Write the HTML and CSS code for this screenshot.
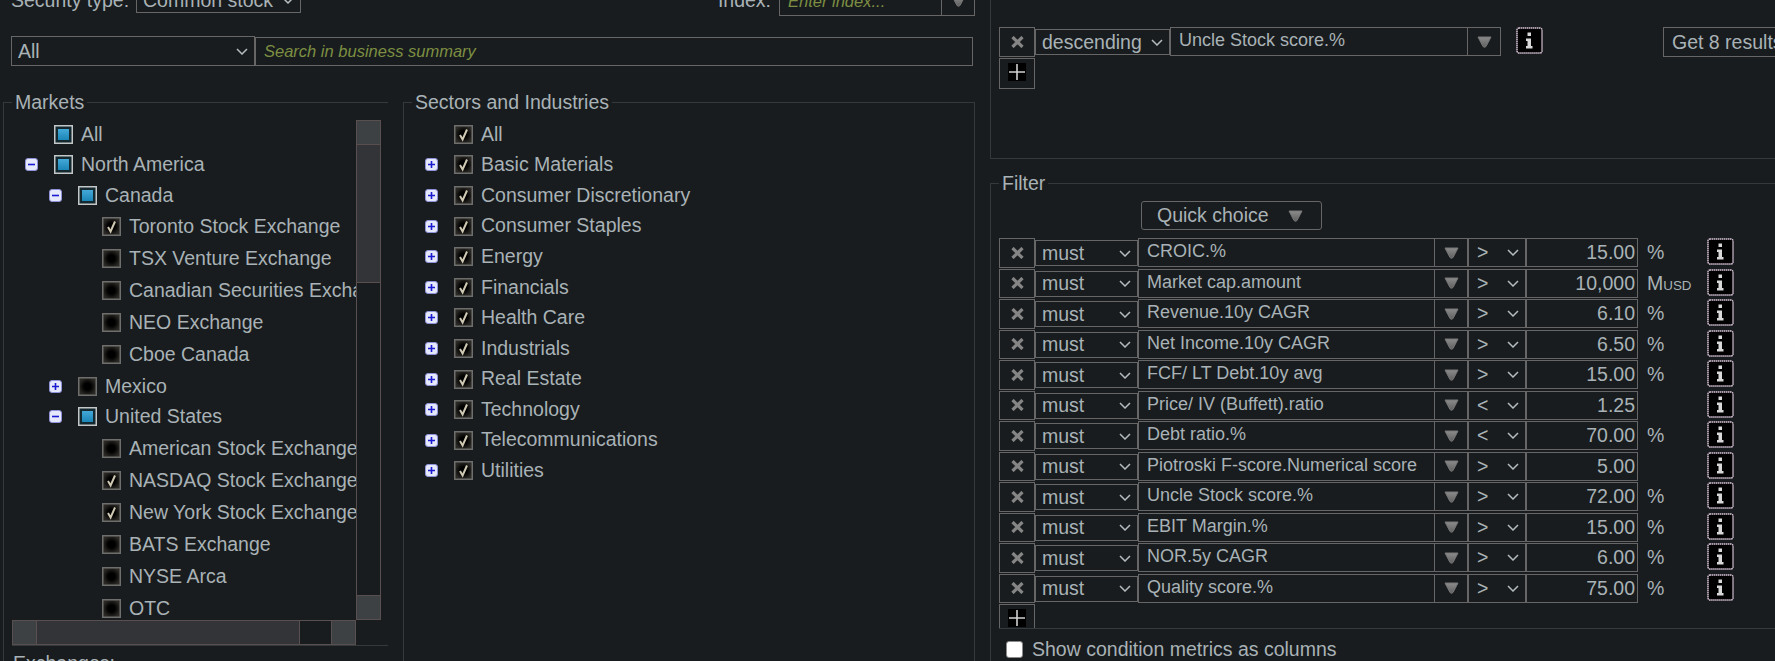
FILE: index.html
```html
<!DOCTYPE html>
<html lang="en">

<head>
    <meta charset="UTF-8">
    <meta name="viewport" content="width=device-width, initial-scale=1.0">
    <title>Stock screener</title>
    <link rel="stylesheet" href="styles.css">
</head>

<body>
<!-- shared icons -->
<svg class="defs" width="0" height="0">
    <defs>
        <radialGradient id="boxDark">
            <stop offset="40%" stop-color="#000"/>
            <stop offset="100%" stop-color="#2b2925"/>
        </radialGradient>
        <linearGradient id="boxBlue" x1="0" y1="0" x2="0" y2="1">
            <stop offset="0%" stop-color="#44a9d8"/>
            <stop offset="100%" stop-color="#1b86b8"/>
        </linearGradient>
        <linearGradient id="arrowGrey" x1="0" y1="0" x2="0" y2="1">
            <stop offset="0%" stop-color="#8c8c8c"/>
            <stop offset="100%" stop-color="#5f5f5f"/>
        </linearGradient>
    </defs>
    <symbol id="cb-off" viewBox="0 0 19 19">
        <rect x="0.75" y="0.75" width="17.5" height="17.5" fill="url(#boxDark)" stroke="#6e6e6c" stroke-width="1.5"/>
    </symbol>
    <symbol id="cb-on" viewBox="0 0 19 19">
        <rect x="0.75" y="0.75" width="17.5" height="17.5" fill="url(#boxDark)" stroke="#6e6e6c" stroke-width="1.5"/>
        <path d="M6 10 L8.6 14.5 L13 4.5" fill="none" stroke="#cfc8b2" stroke-width="2"/>
    </symbol>
    <symbol id="cb-part" viewBox="0 0 19 19">
        <rect x="0.75" y="0.75" width="17.5" height="17.5" fill="#14282f" stroke="#c4c7c8" stroke-width="1.5"/>
        <rect x="4" y="4" width="11" height="11" fill="url(#boxBlue)"/>
    </symbol>
    <symbol id="exp-plus" viewBox="0 0 13 13">
        <rect x="0.5" y="0.5" width="12" height="12" rx="2.5" fill="#e6e8fb" stroke="#8f93dc"/>
        <path d="M3 6.5 H10 M6.5 3 V10" stroke="#1a1ad0" stroke-width="1.6"/>
    </symbol>
    <symbol id="exp-minus" viewBox="0 0 13 13">
        <rect x="0.5" y="0.5" width="12" height="12" rx="2.5" fill="#e6e8fb" stroke="#8f93dc"/>
        <path d="M3 6.5 H10" stroke="#1a1ad0" stroke-width="1.6"/>
    </symbol>
    <symbol id="chev" viewBox="0 0 12 7">
        <path d="M1 1 L6 6 L11 1" fill="none" stroke="#b4bcc0" stroke-width="1.5"/>
    </symbol>
    <symbol id="arrow" viewBox="0 0 15 12">
        <path d="M1 1 H14 L9 10.5 Q7.5 12 6 10.5 Z" fill="url(#arrowGrey)" stroke="#777" stroke-linejoin="round"/>
    </symbol>
    <symbol id="cross" viewBox="0 0 13 12">
        <path d="M1.5 1 L11.5 11 M11.5 1 L1.5 11" stroke="#858585" stroke-width="3.2"/>
    </symbol>
    <symbol id="plus" viewBox="0 0 18 18">
        <rect width="18" height="18" fill="#000"/>
        <path d="M1 9 H17 M9 1 V17" stroke="#d0d0d0" stroke-width="1.6"/>
    </symbol>
    <symbol id="info" viewBox="0 0 27 27">
        <rect x="1" y="1" width="25" height="25" rx="2" fill="#000" stroke="#d8c4d8" stroke-width="1.5" stroke-dasharray="1.5 .5"/>
        <path d="M11.5 5.5 H15 V9 H11.5 Z M10 11.5 H15 V19 H16.5 V21.5 H10 V19 H11.5 V14 H10 Z" fill="#d8d8d8"/>
    </symbol>
</svg>

<div class="page">

    <div class="left">
        <div class="type-row">
            <span class="type-label">Security type:</span>
            <div class="sel type-sel"><span>Common stock</span><svg class="chev"><use href="#chev"/></svg></div>
            <span class="index-label">Index:</span>
            <div class="field index-field">
                <span class="field-text hint">Enter index...</span>
                <span class="field-arrow"><svg class="arrow"><use href="#arrow"/></svg></span>
            </div>
        </div>

        <div class="search-row">
            <div class="sel search-sel"><span>All</span><svg class="chev"><use href="#chev"/></svg></div>
            <div class="search-box hint">Search in business summary</div>
        </div>

        <div class="panels">
            <fieldset class="markets">
                <legend>Markets</legend>
                <div class="tree-wrap">
                    <div class="tree">
                        <div class="node"><span class="exp"></span><svg class="cb"><use href="#cb-part"/></svg>All</div>
                        <div class="node"><svg class="exp"><use href="#exp-minus"/></svg><svg class="cb"><use href="#cb-part"/></svg>North America</div>
                        <div class="node lvl1"><svg class="exp"><use href="#exp-minus"/></svg><svg class="cb"><use href="#cb-part"/></svg>Canada</div>
                        <div class="node leaf"><svg class="cb"><use href="#cb-on"/></svg>Toronto Stock Exchange</div>
                        <div class="node leaf"><svg class="cb"><use href="#cb-off"/></svg>TSX Venture Exchange</div>
                        <div class="node leaf"><svg class="cb"><use href="#cb-off"/></svg>Canadian Securities Exchange</div>
                        <div class="node leaf"><svg class="cb"><use href="#cb-off"/></svg>NEO Exchange</div>
                        <div class="node leaf"><svg class="cb"><use href="#cb-off"/></svg>Cboe Canada</div>
                        <div class="node lvl1"><svg class="exp"><use href="#exp-plus"/></svg><svg class="cb"><use href="#cb-off"/></svg>Mexico</div>
                        <div class="node lvl1"><svg class="exp"><use href="#exp-minus"/></svg><svg class="cb"><use href="#cb-part"/></svg>United States</div>
                        <div class="node leaf"><svg class="cb"><use href="#cb-off"/></svg>American Stock Exchange</div>
                        <div class="node leaf"><svg class="cb"><use href="#cb-on"/></svg>NASDAQ Stock Exchange</div>
                        <div class="node leaf"><svg class="cb"><use href="#cb-on"/></svg>New York Stock Exchange</div>
                        <div class="node leaf"><svg class="cb"><use href="#cb-off"/></svg>BATS Exchange</div>
                        <div class="node leaf"><svg class="cb"><use href="#cb-off"/></svg>NYSE Arca</div>
                        <div class="node leaf"><svg class="cb"><use href="#cb-off"/></svg>OTC</div>
                    </div>
                    <div class="vbar">
                        <span class="bar-btn"></span>
                        <span class="vthumb"></span>
                        <span class="bar-track"></span>
                        <span class="bar-btn"></span>
                    </div>
                    <div class="hbar">
                        <span class="bar-btn"></span>
                        <span class="hthumb"></span>
                        <span class="bar-track"></span>
                        <span class="bar-btn"></span>
                    </div>
                </div>
                <div class="exchanges">Exchanges:</div>
            </fieldset>

            <fieldset class="sectors">
                <legend>Sectors and Industries</legend>
                <div class="sector-list">
                    <div class="node"><span class="exp"></span><svg class="cb"><use href="#cb-on"/></svg>All</div>
                    <div class="node"><svg class="exp"><use href="#exp-plus"/></svg><svg class="cb"><use href="#cb-on"/></svg>Basic Materials</div>
                    <div class="node"><svg class="exp"><use href="#exp-plus"/></svg><svg class="cb"><use href="#cb-on"/></svg>Consumer Discretionary</div>
                    <div class="node"><svg class="exp"><use href="#exp-plus"/></svg><svg class="cb"><use href="#cb-on"/></svg>Consumer Staples</div>
                    <div class="node"><svg class="exp"><use href="#exp-plus"/></svg><svg class="cb"><use href="#cb-on"/></svg>Energy</div>
                    <div class="node"><svg class="exp"><use href="#exp-plus"/></svg><svg class="cb"><use href="#cb-on"/></svg>Financials</div>
                    <div class="node"><svg class="exp"><use href="#exp-plus"/></svg><svg class="cb"><use href="#cb-on"/></svg>Health Care</div>
                    <div class="node"><svg class="exp"><use href="#exp-plus"/></svg><svg class="cb"><use href="#cb-on"/></svg>Industrials</div>
                    <div class="node"><svg class="exp"><use href="#exp-plus"/></svg><svg class="cb"><use href="#cb-on"/></svg>Real Estate</div>
                    <div class="node"><svg class="exp"><use href="#exp-plus"/></svg><svg class="cb"><use href="#cb-on"/></svg>Technology</div>
                    <div class="node"><svg class="exp"><use href="#exp-plus"/></svg><svg class="cb"><use href="#cb-on"/></svg>Telecommunications</div>
                    <div class="node"><svg class="exp"><use href="#exp-plus"/></svg><svg class="cb"><use href="#cb-on"/></svg>Utilities</div>
                </div>
            </fieldset>
        </div>
    </div>

    <div class="right">
        <div class="sort-box">
            <div class="sort-row">
                <div class="del"><svg class="cross"><use href="#cross"/></svg></div>
                <div class="sel sort-sel"><span>descending</span><svg class="chev"><use href="#chev"/></svg></div>
                <div class="field sort-field">
                    <span class="field-text">Uncle Stock score.%</span>
                    <span class="field-arrow"><svg class="arrow"><use href="#arrow"/></svg></span>
                </div>
                <svg class="info sort-info"><use href="#info"/></svg>
                <div class="results">Get 8 results</div>
            </div>
            <div class="add sort-add"><svg class="plus"><use href="#plus"/></svg></div>
        </div>

        <fieldset class="filter">
            <legend>Filter</legend>
            <div class="quick">Quick choice<svg class="arrow"><use href="#arrow"/></svg></div>

            <div class="f-row">
                <div class="del"><svg class="cross"><use href="#cross"/></svg></div>
                <div class="sel must"><span>must</span><svg class="chev"><use href="#chev"/></svg></div>
                <div class="field metric"><span class="field-text">CROIC.%</span><span class="field-arrow"><svg class="arrow"><use href="#arrow"/></svg></span></div>
                <div class="sel op"><span>&gt;</span><svg class="chev"><use href="#chev"/></svg></div>
                <div class="value">15.00</div>
                <div class="unit">%</div>
                <svg class="info"><use href="#info"/></svg>
            </div>
            <div class="f-row">
                <div class="del"><svg class="cross"><use href="#cross"/></svg></div>
                <div class="sel must"><span>must</span><svg class="chev"><use href="#chev"/></svg></div>
                <div class="field metric"><span class="field-text">Market cap.amount</span><span class="field-arrow"><svg class="arrow"><use href="#arrow"/></svg></span></div>
                <div class="sel op"><span>&gt;</span><svg class="chev"><use href="#chev"/></svg></div>
                <div class="value">10,000</div>
                <div class="unit">M<small>USD</small></div>
                <svg class="info"><use href="#info"/></svg>
            </div>
            <div class="f-row">
                <div class="del"><svg class="cross"><use href="#cross"/></svg></div>
                <div class="sel must"><span>must</span><svg class="chev"><use href="#chev"/></svg></div>
                <div class="field metric"><span class="field-text">Revenue.10y CAGR</span><span class="field-arrow"><svg class="arrow"><use href="#arrow"/></svg></span></div>
                <div class="sel op"><span>&gt;</span><svg class="chev"><use href="#chev"/></svg></div>
                <div class="value">6.10</div>
                <div class="unit">%</div>
                <svg class="info"><use href="#info"/></svg>
            </div>
            <div class="f-row">
                <div class="del"><svg class="cross"><use href="#cross"/></svg></div>
                <div class="sel must"><span>must</span><svg class="chev"><use href="#chev"/></svg></div>
                <div class="field metric"><span class="field-text">Net Income.10y CAGR</span><span class="field-arrow"><svg class="arrow"><use href="#arrow"/></svg></span></div>
                <div class="sel op"><span>&gt;</span><svg class="chev"><use href="#chev"/></svg></div>
                <div class="value">6.50</div>
                <div class="unit">%</div>
                <svg class="info"><use href="#info"/></svg>
            </div>
            <div class="f-row">
                <div class="del"><svg class="cross"><use href="#cross"/></svg></div>
                <div class="sel must"><span>must</span><svg class="chev"><use href="#chev"/></svg></div>
                <div class="field metric"><span class="field-text">FCF/ LT Debt.10y avg</span><span class="field-arrow"><svg class="arrow"><use href="#arrow"/></svg></span></div>
                <div class="sel op"><span>&gt;</span><svg class="chev"><use href="#chev"/></svg></div>
                <div class="value">15.00</div>
                <div class="unit">%</div>
                <svg class="info"><use href="#info"/></svg>
            </div>
            <div class="f-row">
                <div class="del"><svg class="cross"><use href="#cross"/></svg></div>
                <div class="sel must"><span>must</span><svg class="chev"><use href="#chev"/></svg></div>
                <div class="field metric"><span class="field-text">Price/ IV (Buffett).ratio</span><span class="field-arrow"><svg class="arrow"><use href="#arrow"/></svg></span></div>
                <div class="sel op"><span>&lt;</span><svg class="chev"><use href="#chev"/></svg></div>
                <div class="value">1.25</div>
                <div class="unit"></div>
                <svg class="info"><use href="#info"/></svg>
            </div>
            <div class="f-row">
                <div class="del"><svg class="cross"><use href="#cross"/></svg></div>
                <div class="sel must"><span>must</span><svg class="chev"><use href="#chev"/></svg></div>
                <div class="field metric"><span class="field-text">Debt ratio.%</span><span class="field-arrow"><svg class="arrow"><use href="#arrow"/></svg></span></div>
                <div class="sel op"><span>&lt;</span><svg class="chev"><use href="#chev"/></svg></div>
                <div class="value">70.00</div>
                <div class="unit">%</div>
                <svg class="info"><use href="#info"/></svg>
            </div>
            <div class="f-row">
                <div class="del"><svg class="cross"><use href="#cross"/></svg></div>
                <div class="sel must"><span>must</span><svg class="chev"><use href="#chev"/></svg></div>
                <div class="field metric"><span class="field-text">Piotroski F-score.Numerical score</span><span class="field-arrow"><svg class="arrow"><use href="#arrow"/></svg></span></div>
                <div class="sel op"><span>&gt;</span><svg class="chev"><use href="#chev"/></svg></div>
                <div class="value">5.00</div>
                <div class="unit"></div>
                <svg class="info"><use href="#info"/></svg>
            </div>
            <div class="f-row">
                <div class="del"><svg class="cross"><use href="#cross"/></svg></div>
                <div class="sel must"><span>must</span><svg class="chev"><use href="#chev"/></svg></div>
                <div class="field metric"><span class="field-text">Uncle Stock score.%</span><span class="field-arrow"><svg class="arrow"><use href="#arrow"/></svg></span></div>
                <div class="sel op"><span>&gt;</span><svg class="chev"><use href="#chev"/></svg></div>
                <div class="value">72.00</div>
                <div class="unit">%</div>
                <svg class="info"><use href="#info"/></svg>
            </div>
            <div class="f-row">
                <div class="del"><svg class="cross"><use href="#cross"/></svg></div>
                <div class="sel must"><span>must</span><svg class="chev"><use href="#chev"/></svg></div>
                <div class="field metric"><span class="field-text">EBIT Margin.%</span><span class="field-arrow"><svg class="arrow"><use href="#arrow"/></svg></span></div>
                <div class="sel op"><span>&gt;</span><svg class="chev"><use href="#chev"/></svg></div>
                <div class="value">15.00</div>
                <div class="unit">%</div>
                <svg class="info"><use href="#info"/></svg>
            </div>
            <div class="f-row">
                <div class="del"><svg class="cross"><use href="#cross"/></svg></div>
                <div class="sel must"><span>must</span><svg class="chev"><use href="#chev"/></svg></div>
                <div class="field metric"><span class="field-text">NOR.5y CAGR</span><span class="field-arrow"><svg class="arrow"><use href="#arrow"/></svg></span></div>
                <div class="sel op"><span>&gt;</span><svg class="chev"><use href="#chev"/></svg></div>
                <div class="value">6.00</div>
                <div class="unit">%</div>
                <svg class="info"><use href="#info"/></svg>
            </div>
            <div class="f-row">
                <div class="del"><svg class="cross"><use href="#cross"/></svg></div>
                <div class="sel must"><span>must</span><svg class="chev"><use href="#chev"/></svg></div>
                <div class="field metric"><span class="field-text">Quality score.%</span><span class="field-arrow"><svg class="arrow"><use href="#arrow"/></svg></span></div>
                <div class="sel op"><span>&gt;</span><svg class="chev"><use href="#chev"/></svg></div>
                <div class="value">75.00</div>
                <div class="unit">%</div>
                <svg class="info"><use href="#info"/></svg>
            </div>

            <div class="add-row">
                <div class="add filter-add"><svg class="plus"><use href="#plus"/></svg></div>
            </div>
            <div class="show-row"><span class="white-box"></span>Show condition metrics as columns</div>
        </fieldset>
    </div>

</div>
</body>

</html>
```

FILE: styles.css
```css
* {
    padding: 0;
    margin: 0;
    box-sizing: border-box;
}

body {
    background-color: #181c1e;
    color: #a9b2b6;
    font: 19.5px "Liberation Sans", Arial, sans-serif;
    overflow: hidden;
}

.defs {
    display: block;
}

.page {
    display: flex;
    height: 661px;
    overflow: hidden;
}

.left {
    width: 990px;
    flex-shrink: 0;
    padding-left: 3px;
}

.right {
    flex: 1;
    min-width: 0;
    overflow: hidden;
}

/* inputs */
.sel {
    display: flex;
    align-items: center;
    justify-content: space-between;
    border: 1px solid #666;
    padding: 0 6px 0 6px;
    flex-shrink: 0;
}

.chev {
    width: 12px;
    height: 7px;
    flex-shrink: 0;
}

.field {
    display: flex;
    border: 1px solid #666;
    flex-shrink: 0;
}

.field-text {
    flex: 1;
    padding: 0 8px;
    font-size: 18px;
    line-height: 25px;
    white-space: nowrap;
    overflow: hidden;
}

.field-arrow {
    width: 33px;
    display: flex;
    align-items: center;
    justify-content: center;
    border-left: 1px solid #666;
}

.arrow {
    width: 15px;
    height: 12px;
    flex-shrink: 0;
}

.hint {
    color: #7d8f42;
    font-style: italic;
    font-size: 16.5px;
}

/* top of left column */
.type-row {
    display: flex;
    align-items: flex-start;
    height: 31px;
    margin-top: -15px;
    padding-left: 8px;
}

.type-label {
    width: 125px;
    line-height: 31px;
}

.type-sel {
    width: 165px;
    height: 28px;
    padding-top: 2px;
}

.index-label {
    width: 470px;
    text-align: right;
    line-height: 31px;
}

.index-field {
    width: 196px;
    height: 31px;
    margin-left: 8px;
}

.index-field .field-text {
    font-size: 16.5px;
    line-height: 31px;
}

.search-row {
    display: flex;
    margin-top: 20px;
    padding-left: 8px;
}

.search-sel {
    width: 244px;
    height: 30px;
}

.search-box {
    width: 718px;
    height: 29px;
    margin-top: 1px;
    border: 1px solid #666;
    padding-left: 8px;
    line-height: 27px;
}

/* panels */
.panels {
    display: flex;
    margin-top: 25px;
}

fieldset {
    border: 1px solid #34393b;
    min-width: 0;
}

legend {
    margin-left: 8px;
    padding: 0 3px;
    line-height: 22px;
}

.markets {
    width: 385px;
    height: 600px;
    border-right: none;
    border-bottom: none;
    padding: 7px 0 0 8px;
}

.markets legend,
.filter legend {
    margin-left: 0;
}

.sectors {
    width: 572px;
    height: 600px;
    margin-left: 15px;
    border-bottom: none;
    padding-top: 7px;
}

.tree-wrap {
    display: grid;
    grid-template-columns: 344px 25px;
    grid-template-rows: 500px 25px;
    border-bottom: 1px solid #34393b;
}

.tree {
    overflow: hidden;
}

.tree .node:first-child,
.sector-list .node:first-child {
    margin-top: -1px;
}

.node {
    display: flex;
    align-items: center;
    height: 30.67px;
    padding-left: 13px;
    white-space: nowrap;
    line-height: 1;
}

.sector-list .node {
    padding-left: 21px;
    height: 30.6px;
}

.lvl1 {
    padding-left: 37px;
}

.leaf {
    height: 32px;
    padding-left: 90px;
}

.exp {
    width: 13px;
    height: 13px;
    margin-right: 16px;
    flex-shrink: 0;
}

.cb {
    width: 19px;
    height: 19px;
    margin-right: 8px;
    flex-shrink: 0;
}

.vbar,
.hbar {
    display: flex;
    background-color: #181c1e;
}

.vbar {
    flex-direction: column;
}

.bar-btn {
    width: 25px;
    height: 25px;
    flex-shrink: 0;
    background-color: #3d4144;
    border: 1px solid #5a4f4f;
}

.vthumb {
    height: 138px;
    background-color: #323437;
    border: 1px solid #5a4f4f;
    border-top: none;
}

.bar-track {
    flex: 1;
    border: 1px solid #5a4f4f;
    border-top: none;
    border-bottom: none;
}

.hthumb {
    width: 263px;
    background-color: #323437;
    border: 1px solid #5a4f4f;
    border-left: none;
}

.hbar .bar-track {
    border: 1px solid #5a4f4f;
    border-left: none;
    border-right: none;
}

.exchanges {
    margin-top: 6px;
    margin-left: 1px;
    line-height: 22px;
}

/* right column */
.sort-box {
    height: 159px;
    border-left: 1px solid #34393b;
    border-bottom: 1px solid #34393b;
    padding: 27px 0 0 8px;
}

.sort-row {
    display: flex;
    align-items: flex-start;
}

.del {
    width: 36px;
    height: 29.5px;
    flex-shrink: 0;
    display: flex;
    align-items: center;
    justify-content: center;
    border: 1px solid #666;
}

.cross {
    width: 13px;
    height: 12px;
}

.sort-sel {
    width: 135px;
    height: 26px;
    margin-top: 2px;
}

.sort-field {
    width: 331px;
    height: 29px;
}

.info {
    width: 27px;
    height: 27px;
    flex-shrink: 0;
}

.sort-info {
    margin-left: 15px;
}

.results {
    width: 160px;
    height: 30px;
    flex-shrink: 0;
    margin-left: 120px;
    border: 1px solid #666;
    padding-left: 8px;
    line-height: 28px;
}

.add {
    width: 36px;
    display: flex;
    justify-content: center;
    border: 1px solid #666;
}

.sort-add {
    height: 31px;
    margin-top: 0.5px;
    padding-top: 4px;
}

.plus {
    width: 18px;
    height: 18px;
}

.filter {
    width: 800px;
    height: 500px;
    margin-top: 13px;
    border-right: none;
    border-bottom: none;
    padding: 7px 0 0 8px;
}

.quick {
    display: flex;
    align-items: center;
    gap: 19px;
    width: 181px;
    height: 29px;
    margin-left: 142px;
    margin-bottom: 8px;
    padding-left: 15px;
    border: 1px solid #666;
    border-radius: 3px;
}

.f-row {
    display: flex;
    align-items: flex-start;
    height: 30.5px;
}

.must {
    width: 103px;
    height: 26px;
    margin-top: 2px;
}

.metric {
    width: 330px;
    height: 29px;
}

.op {
    width: 58px;
    height: 29px;
    padding-left: 8px;
}

.value {
    width: 112px;
    height: 29px;
    flex-shrink: 0;
    border: 1px solid #666;
    padding-right: 2px;
    text-align: right;
    line-height: 27px;
}

.unit {
    width: 69px;
    flex-shrink: 0;
    padding-left: 9px;
    line-height: 29px;
    white-space: nowrap;
}

.unit small {
    font-size: 13.4px;
}

.add-row {
    height: 24.5px;
    border-bottom: 1px solid #34393b;
}

.filter-add {
    height: 24px;
    border-bottom: none;
    padding-top: 4px;
    overflow: hidden;
}

.show-row {
    display: flex;
    align-items: center;
    margin-top: 12px;
    margin-left: 7px;
    height: 18px;
    white-space: nowrap;
}

.white-box {
    width: 17px;
    height: 17px;
    margin-right: 9px;
    background-color: #fff;
    border: 1px solid #8a8a8a;
    border-radius: 3px;
}
```
